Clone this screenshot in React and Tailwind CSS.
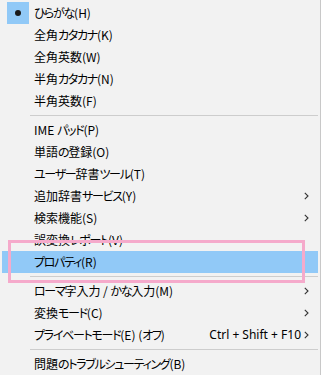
import React from "react";

const Chevron = () => (
  <svg width="5" height="8" viewBox="0 0 5 8" className="block">
    <path d="M0.8 0.8 L4 4 L0.8 7.2" fill="none" stroke="#333" strokeWidth="1.1" />
  </svg>
);

function Label({ text }) {
  const parts = text.split(/([\u3040-\u30ff]+)/);
  return (
    <>
      {parts.map((p, i) =>
        /[\u3040-\u30ff]/.test(p) ? (
          <span key={i} className="tracking-[-1.3px]">
            {p}
          </span>
        ) : (
          <span key={i}>{p}</span>
        )
      )}
    </>
  );
}

function Item({ label, arrow, shortcut, checked, active }) {
  return (
    <div className={"relative flex h-[22px] items-center " + (active ? "bg-[#91c9f7]" : "")}>
      <div className="flex h-[22px] w-[32px] shrink-0 items-center justify-center">
        {checked && (
          <div className="flex h-[22px] w-[22px] items-center justify-center bg-[#91c9f7]">
            <div className="h-[6px] w-[6px] rounded-full bg-[#1a1a1a]" />
          </div>
        )}
      </div>
      <div className="flex-1 whitespace-nowrap">
        <Label text={label} />
      </div>
      {shortcut && (
        <div className="whitespace-nowrap pr-[3px]" style={{ fontFamily: "'Noto Sans', sans-serif" }}>
          {shortcut}
        </div>
      )}
      <div className="flex w-[14px] shrink-0 items-center">{(arrow || shortcut) && <Chevron />}</div>
    </div>
  );
}

const Sep = () => (
  <div className="pb-[3px] pl-[28px] pt-[3px]">
    <div className="h-px bg-[#cdcdcd]" />
  </div>
);

export default function App() {
  return (
    <div
      className="relative h-[375px] w-[321px] overflow-hidden border-r border-[#c8c8c8] bg-[#f2f2f2] pl-[2px] pr-[2px] pt-[2px] text-[12px] leading-none text-black [font-feature-settings:'palt']"
      style={{ fontFamily: "'Noto Sans CJK JP', sans-serif" }}
    >
      <Item label="ひらがな(H)" checked />
      <Item label="全角カタカナ(K)" />
      <Item label="全角英数(W)" />
      <Item label="半角カタカナ(N)" />
      <Item label="半角英数(F)" />
      <Sep />
      <Item label="IME パッド(P)" />
      <Item label="単語の登録(O)" />
      <Item label="ユーザー辞書ツール(T)" />
      <Item label="追加辞書サービス(Y)" arrow />
      <Item label="検索機能(S)" arrow />
      <Item label="誤変換レポート(V)" />
      <Item label="プロパティ(R)" active />
      <Sep />
      <Item label="ローマ字入力 / かな入力(M)" arrow />
      <Item label="変換モード(C)" arrow />
      <Item label="プライベートモード(E) (オフ)" shortcut="Ctrl + Shift + F10" />
      <Sep />
      <Item label="問題のトラブルシューティング(B)" />
      <div className="pointer-events-none absolute left-[8px] top-[240px] h-[43px] w-[297px] border-[3px] border-[#f5aacb]" />
    </div>
  );
}
